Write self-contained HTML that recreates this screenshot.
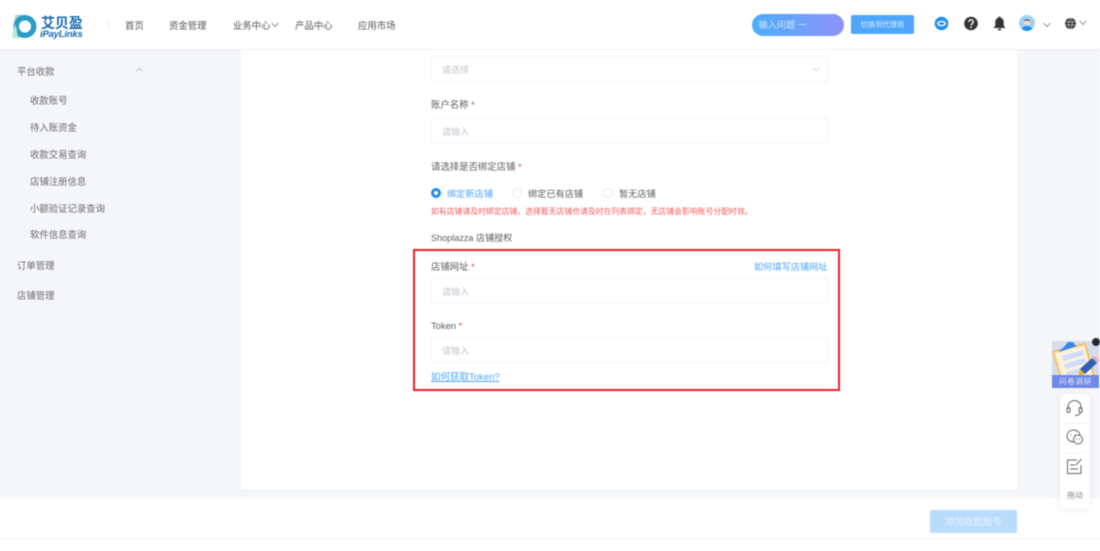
<!DOCTYPE html>
<html lang="zh"><head><meta charset="utf-8"><title>iPayLinks</title>
<style>
*{box-sizing:border-box}
html,body{margin:0;padding:0;background:#fff}
body{width:1100px;height:551px;overflow:hidden;position:relative;font-family:"Liberation Sans","Noto Sans CJK SC",sans-serif;color:#666}
#page{position:absolute;inset:0;filter:blur(.45px)}
.a{position:absolute;white-space:nowrap;line-height:14px}
.nav{font-size:9.4px;color:#555;top:19px}
.side{font-size:9.4px;color:#6a6a6a}
.label{font-size:9.4px;color:#5e5e5e}
.req{color:#f5484d}
.input{position:absolute;left:431px;width:397px;height:26px;background:#fff;border:1px solid #f3f4f6;border-radius:2px}
.ph{font-size:9px;color:#c2c6cb;left:442px}
.radio{position:absolute;width:10px;height:10px;border-radius:50%;border:1px solid #e6e8eb;background:#fff;top:188px}
</style></head>
<body><div id="page">
<div class="a" style="left:0;top:50px;width:1100px;height:448px;background:#f4f6fa"></div>
<div class="a" style="left:241px;top:50px;width:776px;height:439px;background:#fff"></div>
<div class="a" style="left:0;top:0;width:1100px;height:50px;background:#fff;border-bottom:1px solid #eef0f2"></div>
<div class="a" style="left:0;top:498px;width:1100px;height:41px;background:#fff"></div>
<div class="a" style="left:0;top:538px;width:1100px;height:3px;background:linear-gradient(#f4f5f7,#fff)"></div>

<svg class="a" style="left:11px;top:14px" width="27" height="25" viewBox="0 0 27 25">
<defs><linearGradient id="g" x1="0" x2="1" y1="0" y2="0"><stop offset="0" stop-color="#c6ecdc"/><stop offset="1" stop-color="#58bcc4"/></linearGradient></defs>
<path d="M4 1H14L9 24H1Z" fill="url(#g)"/>
<circle cx="14" cy="12.500" r="8.700" fill="none" stroke="#2a9cc6" stroke-width="5.500"/>
<path d="M5.500 14 7 24H1.500L4 10Z" fill="#b9e8d6"/>
<circle cx="14" cy="12.500" r="6" fill="#fff"/>
</svg>
<div class="a" style="left:41px;top:16px;font-size:14px;font-weight:700;color:#1668b0;letter-spacing:-.1px;line-height:15px">艾贝盈</div>
<div class="a" style="left:40px;top:29px;font-size:9.500px;font-weight:700;font-style:italic;color:#1668b0;letter-spacing:-.2px;line-height:11px">iPayLinks</div>
<div class="a" style="left:108px;top:20px;width:1px;height:10px;background:#ececec"></div>

<div class="a nav" style="left:125px">首页</div>
<div class="a nav" style="left:169px">资金管理</div>
<div class="a nav" style="left:233px">业务中心</div>
<svg class="a" style="left:271px;top:22px" width="8" height="6" viewBox="0 0 8 6"><path d="M.7 1 4 4.500 7.300 1" fill="none" stroke="#777" stroke-width=".8"/></svg>
<div class="a nav" style="left:295px">产品中心</div>
<div class="a nav" style="left:358px">应用市场</div>

<div class="a" style="left:752px;top:14px;width:92px;height:22px;border-radius:11px;background:linear-gradient(90deg,#4aaefb,#8e93f8);color:#cfe6fc;font-size:9.200px;line-height:23px;padding-left:6.500px">输入问题 一</div>
<div class="a" style="left:851px;top:15px;width:63px;height:19px;border-radius:2px;background:#4da6fb;color:#dcedfe;font-size:7.300px;line-height:19px;text-align:center">切换到代理商</div>

<svg class="a" style="left:934px;top:16px" width="15" height="15" viewBox="0 0 15 15"><circle cx="7.500" cy="7.500" r="6.800" fill="#1f8ef1"/><ellipse cx="7.500" cy="7.500" rx="4.500" ry="2.800" fill="#fff"/><ellipse cx="7.500" cy="7.500" rx="2.800" ry="1.400" fill="#1f8ef1"/></svg>
<svg class="a" style="left:964px;top:16px" width="14" height="15" viewBox="0 0 14 15"><circle cx="7" cy="7.500" r="6.800" fill="#333"/><path d="M4.800 6A2.200 2.200 0 1 1 8.300 7.700C7.500 8.200 7 8.600 7 9.500" fill="none" stroke="#fff" stroke-width="1.400"/><circle cx="7" cy="11.300" r=".9" fill="#fff"/></svg>
<svg class="a" style="left:993px;top:16px" width="13" height="15" viewBox="0 0 13 15"><path d="M6.500 .5C7.300 .5 7.600 1 7.600 1.700 9.800 2.300 10.700 4 10.700 6.300V9.500L12.500 12H.5L2.300 9.500V6.300C2.300 4 3.200 2.300 5.400 1.700 5.400 1 5.700 .5 6.500 .5Z" fill="#333"/><path d="M4.800 12.800H8.200A1.700 1.700 0 0 1 4.800 12.800Z" fill="#333"/></svg>
<svg class="a" style="left:1019px;top:15px" width="16" height="16" viewBox="0 0 16 16"><circle cx="8" cy="8" r="8" fill="#9fd0f7"/><path d="M2.800 14C4 11.500 6 11 8 11S12 11.500 13.200 14A8 8 0 0 1 2.800 14Z" fill="#1f8ef1"/><ellipse cx="8" cy="7" rx="3" ry="3.800" fill="#f4d9c6"/><path d="M5 6.500C5 3.500 11 3.500 11 6.500 9.500 5 6.500 5 5 6.500Z" fill="#333"/></svg>
<svg class="a" style="left:1043px;top:22px" width="8" height="6" viewBox="0 0 8 6"><path d="M.7 1 4 4.500 7.300 1" fill="none" stroke="#777" stroke-width=".8"/></svg>
<svg class="a" style="left:1065px;top:18px" width="11" height="11" viewBox="0 0 11 11"><circle cx="5.500" cy="5.500" r="5.500" fill="#333"/><path d="M0 4H11M0 7H11M5.500 0C3 3 3 8 5.500 11M5.500 0C8 3 8 8 5.500 11" fill="none" stroke="#fff" stroke-width=".5"/></svg>
<svg class="a" style="left:1079px;top:20px" width="8" height="6" viewBox="0 0 8 6"><path d="M.7 1 4 4.500 7.300 1" fill="none" stroke="#777" stroke-width=".8"/></svg>

<div class="a side" style="left:17px;top:65px">平台收款</div>
<svg class="a" style="left:135px;top:67px" width="9" height="6" viewBox="0 0 9 6"><path d="M1 4.500 4.500 1.300 8 4.500" fill="none" stroke="#b5b5b5" stroke-width=".8"/></svg>
<div class="a side" style="left:30px;top:94px">收款账号</div>
<div class="a side" style="left:30px;top:121px">待入账资金</div>
<div class="a side" style="left:30px;top:148px">收款交易查询</div>
<div class="a side" style="left:30px;top:175px">店铺注册信息</div>
<div class="a side" style="left:30px;top:202px">小额验证记录查询</div>
<div class="a side" style="left:30px;top:228px">软件信息查询</div>
<div class="a side" style="left:17px;top:259px">订单管理</div>
<div class="a side" style="left:17px;top:289px">店铺管理</div>

<div class="input" style="top:56px"></div>
<div class="a ph" style="top:63px">请选择</div>
<svg class="a" style="left:812px;top:66px" width="9" height="6" viewBox="0 0 9 6"><path d="M1 1.300 4.500 4.500 8 1.300" fill="none" stroke="#ccd0d4" stroke-width=".8"/></svg>

<div class="a label" style="left:431px;top:98px">账户名称 <span class="req">*</span></div>
<div class="input" style="top:118px"></div>
<div class="a ph" style="top:125px">请输入</div>

<div class="a label" style="left:431px;top:160px">请选择是否绑定店铺 <span class="req">*</span></div>
<div class="radio" style="left:431px;border:3px solid #1f8ef1"></div>
<div class="a" style="left:447px;top:187px;font-size:9.200px;color:#4da6fb">绑定新店铺</div>
<div class="radio" style="left:512px"></div>
<div class="a label" style="left:528px;top:187px;font-size:9.200px">绑定已有店铺</div>
<div class="radio" style="left:603px"></div>
<div class="a label" style="left:619px;top:187px;font-size:9.200px">暂无店铺</div>
<div class="a" style="left:431px;top:205px;font-size:7.850px;color:#f2585c">如有店铺请及时绑定店铺，选择暂无店铺也请及时在列表绑定，无店铺会影响账号分配时效。</div>
<div class="a label" style="left:431px;top:231px;font-size:9.100px">Shoplazza 店铺授权</div>

<div class="a" style="left:413px;top:249px;width:427px;height:142px;border:2px solid #f01c24"></div>
<div class="a label" style="left:431px;top:260px">店铺网址 <span class="req">*</span></div>
<div class="a" style="left:754px;top:260px;font-size:9.200px;color:#4da6fb">如何填写店铺网址</div>
<div class="input" style="top:278px"></div>
<div class="a ph" style="top:285px">请输入</div>
<div class="a label" style="left:431px;top:319px">Token <span class="req">*</span></div>
<div class="input" style="top:337px"></div>
<div class="a ph" style="top:344px">请输入</div>
<div class="a" style="left:431px;top:371px;font-size:9.500px;color:#4da6fb;text-decoration:underline">如何获取Token?</div>

<div class="a" style="left:930px;top:510px;width:87px;height:23px;border-radius:2px;background:#b9dcfd;color:#e6f2fe;font-size:9.500px;line-height:25px;text-align:center">添加收款账号</div>

<svg class="a" style="left:1052px;top:341px" width="47" height="47" viewBox="0 0 47 47">
<rect width="47" height="47" fill="#d5dcea"/>
<path d="M1 11 33 3 42 36H9Z" fill="#fdf3dc" stroke="#f7bd6a" stroke-width="2"/>
<path d="M10 15 31 9 32.500 14 11.500 20ZM12 23 33 17 34.500 22 13.500 28ZM14 31 35 25 36 30 15.500 35Z" fill="#cfdcfb"/>
<path d="M7 10 12 6 16 1 21 1 24 5 25 5 7 11Z" fill="#3a84e8"/>
<path d="M28 28 40 17 45 22 33 33Z" fill="#2f5fb6"/>
<path d="M40 17 42 15 47 19 45 22Z" fill="#ee9fb0"/>
<path d="M26 35 28 28 33 33Z" fill="#f5b020"/>
</svg>
<div class="a" style="left:1052px;top:375px;width:47px;height:13px;background:#7088e6;color:#e6e9fc;font-size:7.500px;line-height:14px;text-align:center;letter-spacing:.8px">问卷调研</div>
<div class="a" style="left:1092px;top:338px;width:8px;height:8px;border-radius:50%;background:#26262e"></div>

<div class="a" style="left:1060px;top:394px;width:30px;height:115px;background:#fff;border-radius:5px;box-shadow:0 1px 6px rgba(60,70,90,.10)"></div>
<svg class="a" style="left:1066px;top:399px" width="17" height="18" viewBox="0 0 17 18"><path d="M2 10V8A6.500 6.500 0 0 1 15 8V10" fill="none" stroke="#666" stroke-width="1"/><rect x="1" y="8.500" width="3" height="5" rx="1.500" fill="none" stroke="#666"/><rect x="13" y="8.500" width="3" height="5" rx="1.500" fill="none" stroke="#666"/><path d="M14.500 13.500C14 16 12 16.500 9 16.500" fill="none" stroke="#666"/></svg>
<div class="a" style="left:1064px;top:423px;width:22px;height:1px;background:#f0f1f3"></div>
<svg class="a" style="left:1066px;top:429px" width="18" height="16" viewBox="0 0 18 16"><path d="M8 13C4 13 1 10.500 1 7S4 1 7.500 1 14 3.500 14 6.500" fill="none" stroke="#666"/><circle cx="12" cy="10.500" r="4.500" fill="#fff" stroke="#666"/><circle cx="10.500" cy="10" r=".6" fill="#666"/><circle cx="13.500" cy="10" r=".6" fill="#666"/><circle cx="5" cy="6" r=".6" fill="#666"/><circle cx="9" cy="6" r=".6" fill="#666"/></svg>
<div class="a" style="left:1064px;top:452px;width:22px;height:1px;background:#f0f1f3"></div>
<svg class="a" style="left:1066px;top:458px" width="17" height="17" viewBox="0 0 17 17"><path d="M11 2H1.500V15.500H15V7" fill="none" stroke="#666" stroke-width="1"/><path d="M4 7H9M4 11H12" stroke="#666"/><path d="M10 7 15.500 1" stroke="#666"/></svg>
<div class="a" style="left:1060px;top:489px;width:30px;text-align:center;font-size:8px;color:#888">拖动</div>
</div></body></html>
